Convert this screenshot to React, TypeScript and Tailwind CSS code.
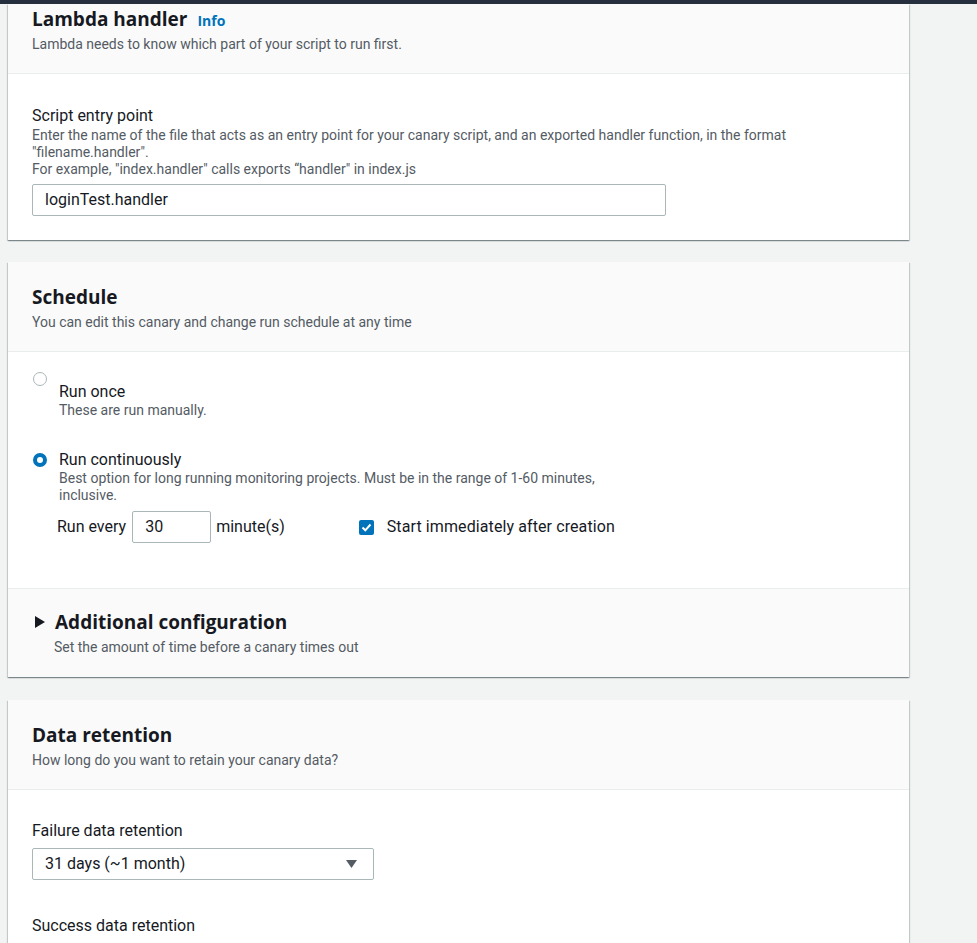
const titleFont = "font-['Open_Sans',sans-serif]";
const bodyFont = "font-['Roboto','Liberation_Sans',sans-serif]";

function CardHeader({
  title,
  desc,
  info,
  top = "pt-[23px]",
}: {
  title: string;
  desc: string;
  info?: boolean;
  top?: string;
}) {
  return (
    <div className={`bg-[#fafafa] border-b border-[#eaeded] px-[24px] pb-[20px] ${top}`}>
      <div className="flex items-baseline gap-[10px]">
        <h2 className={`${titleFont} text-[19px] leading-[24px] font-bold text-[#16191f]`}>{title}</h2>
        {info && <a className={`${titleFont} text-[14px] font-bold text-[#0073bb]`}>Info</a>}
      </div>
      <p className="mt-[5px] text-[14px] leading-[17px] text-[#545b64]">{desc}</p>
    </div>
  );
}

function Radio({ checked }: { checked?: boolean }) {
  return checked ? (
    <span className="block w-[14px] h-[14px] rounded-full border-[4px] border-[#0073bb] bg-white shrink-0" />
  ) : (
    <span className="block w-[14px] h-[14px] rounded-full border border-[#aab7b8] bg-white shrink-0" />
  );
}

function Select({ value }: { value?: string }) {
  return (
    <div className="w-[342px] h-[32px] border border-[#aab7b8] rounded-[2px] bg-white flex items-center justify-between pl-[12px] pr-[16px]">
      <span className="text-[16px] text-[#16191f]">{value}</span>
      <svg width="11" height="8" viewBox="0 0 11 8">
        <path d="M0 0h11L5.5 8z" fill="#545b64" />
      </svg>
    </div>
  );
}

const cardShadow =
  "bg-white shadow-[0_1px_1px_0_rgba(0,28,36,0.3),1px_1px_1px_0_rgba(0,28,36,0.15),-1px_1px_1px_0_rgba(0,28,36,0.15)]";

export default function App() {
  return (
    <div className={`${bodyFont} bg-[#f2f3f3] h-[943px] overflow-hidden text-[#16191f]`}>
      <div className="h-[4px] bg-[#252f3d]" />
      <div className="pl-[8px] w-[909px]">
        {/* Lambda handler */}
        <section className={cardShadow}>
          <CardHeader
            title="Lambda handler"
            info
            top="pt-[3px]"
            desc="Lambda needs to know which part of your script to run first."
          />
          <div className="px-[24px] pt-[31px] pb-[24px]">
            <div className="text-[16px] leading-[22px]">Script entry point</div>
            <p className="text-[14px] leading-[17px] text-[#545b64]">
              Enter the name of the file that acts as an entry point for your canary script, and an exported handler
              function, in the format "filename.handler".
              <br />
              For example, "index.handler" calls exports “handler" in index.js
            </p>
            <div className="mt-[6px] w-[634px] h-[32px] border border-[#aab7b8] rounded-[2px] flex items-center px-[12px] text-[16px]">
              loginTest.handler
            </div>
          </div>
        </section>

        {/* Schedule */}
        <section className={`${cardShadow} mt-[22px]`}>
          <CardHeader title="Schedule" desc="You can edit this canary and change run schedule at any time" />
          <div className="pl-[25px] pr-[24px] pt-[20px] pb-[45px]">
            <div className="flex items-start gap-[12px]">
              <Radio />
              <div className="pt-[10px]">
                <div className="text-[16px] leading-[20px]">Run once</div>
                <div className="text-[14px] leading-[17px] text-[#545b64]">These are run manually.</div>
              </div>
            </div>
            <div className="mt-[31px] flex items-start gap-[12px]">
              <div className="pt-[3px]">
                <Radio checked />
              </div>
              <div>
                <div className="text-[16px] leading-[20px]">Run continuously</div>
                <div className="w-[560px] text-[14px] leading-[17px] text-[#545b64]">
                  Best option for long running monitoring projects. Must be in the range of 1-60 minutes, inclusive.
                </div>
                <div className="mt-[7px] -ml-[2px] flex items-center text-[16px]">
                  <span>Run every</span>
                  <div className="ml-[6px] w-[79px] h-[32px] border border-[#aab7b8] rounded-[2px] flex items-center px-[12px]">
                    30
                  </div>
                  <span className="ml-[5px]">minute(s)</span>
                  <span className="ml-[74px] w-[15px] h-[15px] rounded-[2px] bg-[#0073bb] flex items-center justify-center">
                    <svg width="11" height="9" viewBox="0 0 11 9">
                      <path d="M1.5 4.5l2.8 2.8L9.5 1.5" stroke="#fff" strokeWidth="2" fill="none" />
                    </svg>
                  </span>
                  <span className="ml-[13px] tracking-[0.1px]">Start immediately after creation</span>
                </div>
              </div>
            </div>
          </div>
          <div className="bg-[#fafafa] border-t border-[#eaeded] px-[24px] pt-[21px] pb-[21px]">
            <div className="flex items-center gap-[10px]">
              <svg width="10" height="12" viewBox="0 0 10 12" className="ml-[3px]">
                <path d="M0 0l10 6-10 6z" fill="#16191f" />
              </svg>
              <h3 className={`${titleFont} text-[19px] leading-[24px] font-bold`}>Additional configuration</h3>
            </div>
            <p className="ml-[22px] mt-[5px] text-[14px] leading-[17px] text-[#545b64]">
              Set the amount of time before a canary times out
            </p>
          </div>
        </section>

        {/* Data retention */}
        <section className={`${cardShadow} mt-[23px]`}>
          <CardHeader title="Data retention" desc="How long do you want to retain your canary data?" />
          <div className="px-[24px] pt-[30px] pb-[30px]">
            <div className="text-[16px] leading-[22px]">Failure data retention</div>
            <div className="mt-[6px]">
              <Select value="31 days (~1 month)" />
            </div>
            <div className="mt-[35px] text-[16px] leading-[22px]">Success data retention</div>
            <div className="mt-[6px]">
              <Select />
            </div>
          </div>
        </section>
      </div>
    </div>
  );
}
